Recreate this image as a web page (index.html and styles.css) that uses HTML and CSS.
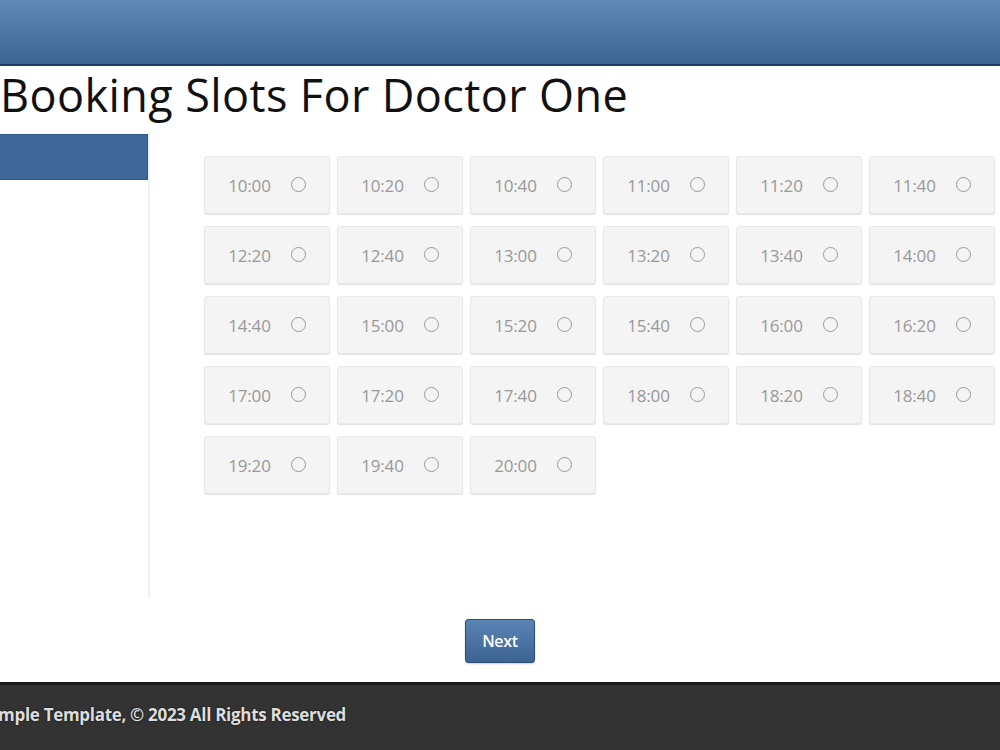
FILE: index.html
```
<!DOCTYPE html>
<html lang="en">
<head>
    <meta charset="UTF-8">
    <meta name="viewport" content="width=device-width, initial-scale=1.0">
    <title>Booking Slots</title>
    <link rel="stylesheet" href="styles.css">
</head>
<body>
    <header class="topbar"></header>
    <h1 class="page_title">Booking Slots For Doctor One</h1>
    <div class="layout">
        <aside class="sidebar">
            <div class="sidebar_head"></div>
        </aside>
        <main class="slots">
            <label class="slot"><span>10:00</span><input type="radio" name="slot"><i class="dot"></i></label>
            <label class="slot"><span>10:20</span><input type="radio" name="slot"><i class="dot"></i></label>
            <label class="slot"><span>10:40</span><input type="radio" name="slot"><i class="dot"></i></label>
            <label class="slot"><span>11:00</span><input type="radio" name="slot"><i class="dot"></i></label>
            <label class="slot"><span>11:20</span><input type="radio" name="slot"><i class="dot"></i></label>
            <label class="slot"><span>11:40</span><input type="radio" name="slot"><i class="dot"></i></label>
            <label class="slot"><span>12:20</span><input type="radio" name="slot"><i class="dot"></i></label>
            <label class="slot"><span>12:40</span><input type="radio" name="slot"><i class="dot"></i></label>
            <label class="slot"><span>13:00</span><input type="radio" name="slot"><i class="dot"></i></label>
            <label class="slot"><span>13:20</span><input type="radio" name="slot"><i class="dot"></i></label>
            <label class="slot"><span>13:40</span><input type="radio" name="slot"><i class="dot"></i></label>
            <label class="slot"><span>14:00</span><input type="radio" name="slot"><i class="dot"></i></label>
            <label class="slot"><span>14:40</span><input type="radio" name="slot"><i class="dot"></i></label>
            <label class="slot"><span>15:00</span><input type="radio" name="slot"><i class="dot"></i></label>
            <label class="slot"><span>15:20</span><input type="radio" name="slot"><i class="dot"></i></label>
            <label class="slot"><span>15:40</span><input type="radio" name="slot"><i class="dot"></i></label>
            <label class="slot"><span>16:00</span><input type="radio" name="slot"><i class="dot"></i></label>
            <label class="slot"><span>16:20</span><input type="radio" name="slot"><i class="dot"></i></label>
            <label class="slot"><span>17:00</span><input type="radio" name="slot"><i class="dot"></i></label>
            <label class="slot"><span>17:20</span><input type="radio" name="slot"><i class="dot"></i></label>
            <label class="slot"><span>17:40</span><input type="radio" name="slot"><i class="dot"></i></label>
            <label class="slot"><span>18:00</span><input type="radio" name="slot"><i class="dot"></i></label>
            <label class="slot"><span>18:20</span><input type="radio" name="slot"><i class="dot"></i></label>
            <label class="slot"><span>18:40</span><input type="radio" name="slot"><i class="dot"></i></label>
            <label class="slot"><span>19:20</span><input type="radio" name="slot"><i class="dot"></i></label>
            <label class="slot"><span>19:40</span><input type="radio" name="slot"><i class="dot"></i></label>
            <label class="slot"><span>20:00</span><input type="radio" name="slot"><i class="dot"></i></label>
        </main>
    </div>
    <div class="actions">
        <button class="btn_next">Next</button>
    </div>
    <footer class="footer">
        <p class="footer_text">Sample Template, &copy; 2023 All Rights Reserved</p>
    </footer>
</body>
</html>
```
FILE: styles.css
```
html, body
{
    margin: 0;
    padding: 0;
    overflow: hidden;
}
body
{
    font-family: "Open Sans", "Noto Sans", sans-serif;
    background-color: #fff;
    color: #111;
}
.topbar
{
    height: 64px;
    background: linear-gradient(#6089b7, #3c6594);
    border-bottom: 2px solid #1f3e66;
}
.page_title
{
    margin: 0;
    height: 68px;
    font-size: 45px;
    font-weight: 400;
    line-height: 57px;
    letter-spacing: 0.4px;
    color: #111;
}
.layout
{
    display: flex;
    height: 464px;
}
.sidebar
{
    width: 148px;
    border-right: 2px solid #f0f0f0;
    flex-shrink: 0;
}
.sidebar_head
{
    height: 44px;
    background-color: #3e6898;
    border: 1px solid #2f5884;
    border-left: none;
}
.slots
{
    padding: 22px 0 0 54px;
    display: grid;
    grid-template-columns: repeat(6, 126px);
    grid-auto-rows: 58px;
    column-gap: 7px;
    row-gap: 12px;
    align-content: start;
}
.slot
{
    display: flex;
    align-items: center;
    justify-content: center;
    gap: 20px;
    background-color: #f4f4f4;
    border: 1px solid #e8e8e8;
    border-radius: 3px;
    box-shadow: 0 1px 1px rgba(0, 0, 0, 0.12);
    box-sizing: border-box;
    color: #999;
    font-size: 17px;
    letter-spacing: -0.2px;
    cursor: pointer;
}
.slot input
{
    display: none;
}
.dot
{
    width: 15px;
    height: 15px;
    border: 1.5px solid #9a9a9a;
    border-radius: 50%;
    box-sizing: border-box;
    margin-top: -2px;
}
.slot input:checked + .dot
{
    background-color: #3e6898;
}
.actions
{
    display: flex;
    justify-content: center;
    padding: 21px 0 19px;
}
.btn_next
{
    width: 70px;
    height: 44px;
    background: linear-gradient(#5a84b3, #3b6493);
    border: 1px solid #2c4f7a;
    border-radius: 3px;
    color: #fff;
    font-family: "Open Sans", sans-serif;
    font-size: 16px;
    font-weight: 600;
    letter-spacing: -0.3px;
    box-shadow: 0 1px 2px rgba(0, 0, 0, 0.2);
}
.footer
{
    height: 69px;
    background-color: #333;
    border-top: 3px solid #1c1c1c;
    box-sizing: border-box;
}
.footer_text
{
    margin: 0 0 0 -21px;
    line-height: 60px;
    font-size: 17px;
    font-weight: 700;
    color: #ddd;
    letter-spacing: -0.3px;
    text-shadow: 0 0 2px rgba(0, 0, 0, 0.8);
}
```
